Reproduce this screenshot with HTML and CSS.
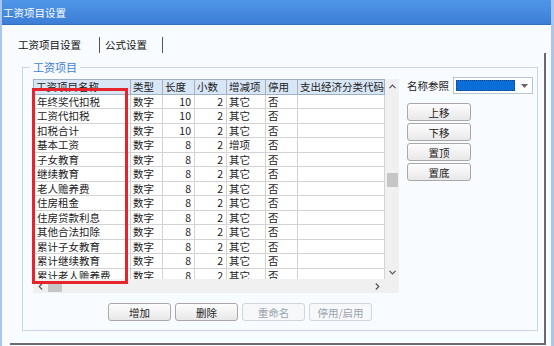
FILE: index.html
```html
<!DOCTYPE html>
<html lang="zh-CN">
<head>
<meta charset="UTF-8">
<meta name="viewport" content="width=device-width, initial-scale=1.0">
<link rel="stylesheet" href="styles.css">
</head>
<body>

<div class="window">
  <div class="titlebar">工资项目设置</div>

  <div class="tabs">
    <span class="tab tab-first">工资项目设置</span>
    <span class="tab-sep"></span>
    <span class="tab tab-second">公式设置</span>
    <span class="tab-sep"></span>
  </div>

  <div class="panel">
    <div class="group">
      <div class="group-title">工资项目</div>

      <div class="group-body">
        <!-- item grid -->
        <div class="grid">
          <div class="grid-view">
            <table>
              <colgroup>
                <col class="c-name"><col class="c-type"><col class="c-len"><col class="c-dec"><col class="c-kind"><col class="c-stop"><col class="c-code">
              </colgroup>
              <tr><th>工资项目名称</th><th>类型</th><th>长度</th><th>小数</th><th>增减项</th><th>停用</th><th>支出经济分类代码</th></tr>
              <tr><td>年终奖代扣税</td><td>数字</td><td class="num">10</td><td class="num">2</td><td>其它</td><td>否</td><td></td></tr>
              <tr><td>工资代扣税</td><td>数字</td><td class="num">10</td><td class="num">2</td><td>其它</td><td>否</td><td></td></tr>
              <tr><td>扣税合计</td><td>数字</td><td class="num">10</td><td class="num">2</td><td>其它</td><td>否</td><td></td></tr>
              <tr><td>基本工资</td><td>数字</td><td class="num">8</td><td class="num">2</td><td>增项</td><td>否</td><td></td></tr>
              <tr><td>子女教育</td><td>数字</td><td class="num">8</td><td class="num">2</td><td>其它</td><td>否</td><td></td></tr>
              <tr><td>继续教育</td><td>数字</td><td class="num">8</td><td class="num">2</td><td>其它</td><td>否</td><td></td></tr>
              <tr><td>老人赡养费</td><td>数字</td><td class="num">8</td><td class="num">2</td><td>其它</td><td>否</td><td></td></tr>
              <tr><td>住房租金</td><td>数字</td><td class="num">8</td><td class="num">2</td><td>其它</td><td>否</td><td></td></tr>
              <tr><td>住房贷款利息</td><td>数字</td><td class="num">8</td><td class="num">2</td><td>其它</td><td>否</td><td></td></tr>
              <tr><td>其他合法扣除</td><td>数字</td><td class="num">8</td><td class="num">2</td><td>其它</td><td>否</td><td></td></tr>
              <tr><td>累计子女教育</td><td>数字</td><td class="num">8</td><td class="num">2</td><td>其它</td><td>否</td><td></td></tr>
              <tr><td>累计继续教育</td><td>数字</td><td class="num">8</td><td class="num">2</td><td>其它</td><td>否</td><td></td></tr>
              <tr><td>累计老人赡养费</td><td>数字</td><td class="num">8</td><td class="num">2</td><td>其它</td><td>否</td><td></td></tr>
            </table>

            <div class="vscroll">
              <span class="arrow"><svg width="7" height="5" viewBox="0 0 7 5"><path d="M0.5 4.2 L3.5 1.2 L6.5 4.2" fill="none" stroke="#555" stroke-width="1.2"/></svg></span>
              <span class="vthumb"></span>
              <span class="arrow arrow-end"><svg width="7" height="5" viewBox="0 0 7 5"><path d="M0.5 0.8 L3.5 3.8 L6.5 0.8" fill="none" stroke="#555" stroke-width="1.2"/></svg></span>
            </div>
          </div>

          <div class="hscroll">
            <span class="arrow"><svg width="5" height="7" viewBox="0 0 5 7"><path d="M4.2 0.5 L1.2 3.5 L4.2 6.5" fill="none" stroke="#555" stroke-width="1.2"/></svg></span>
            <span class="hthumb"></span>
            <span class="arrow arrow-end"><svg width="5" height="7" viewBox="0 0 5 7"><path d="M0.8 0.5 L3.8 3.5 L0.8 6.5" fill="none" stroke="#555" stroke-width="1.2"/></svg></span>
            <span class="corner"></span>
          </div>

          <!-- red annotation box -->
          <div class="mark"></div>
        </div>

        <!-- right side -->
        <div class="side">
          <div class="ref">
            <span class="ref-label">名称参照</span>
            <span class="combo">
              <span class="combo-value"></span>
              <svg class="combo-arrow" width="7" height="4" viewBox="0 0 7 4"><path d="M0 0 L7 0 L3.5 4 Z" fill="#666"/></svg>
            </span>
          </div>
          <div class="side-buttons">
            <button class="btn">上移</button>
            <button class="btn">下移</button>
            <button class="btn">置顶</button>
            <button class="btn">置底</button>
          </div>
        </div>
      </div>

      <div class="actions">
        <button class="btn">增加</button>
        <button class="btn">删除</button>
        <button class="btn" disabled>重命名</button>
        <button class="btn" disabled>停用/启用</button>
      </div>
    </div>
  </div>
</div>

</body>
</html>
```

FILE: styles.css
```css
body {
  margin: 0;
  font-family: "Noto Sans CJK SC", "Noto Sans", sans-serif;
  font-size: 10.5px;
  color: #1b1b1b;
}
.window {
  width: 554px;
  height: 346px;
  box-sizing: border-box;
  border-left: 2px solid #a9c7ee;
  border-right: 3px solid #a9c7ee;
  background: #f8fbff;
  overflow: hidden;
}
.titlebar {
  height: 24px;
  line-height: 25px;
  padding-left: 1px;
  color: #fff;
  background: linear-gradient(#4f96e8, #3c7ed7);
  border-bottom: 1px solid #3470c2;
}

/* tabs */
.tabs {
  display: flex;
  align-items: center;
  height: 28px;
  box-sizing: border-box;
  padding: 12px 0 0 16px;
}
.tab {
  line-height: 16px;
  color: #111;
}
.tab-first {
  margin-right: 18px;
}
.tab-second {
  margin: 0 15px 0 5px;
}
.tab-sep {
  width: 1px;
  height: 16px;
  background: #555;
}

.panel {
  width: 536px;
  height: 292px;
  box-sizing: border-box;
  margin-left: 8px;
  padding: 14px 0 0 12px;
  border-right: 2px solid #6a6a6a;
  border-bottom: 2px solid #6a6a6a;
}
.group {
  width: 516px;
  height: 264px;
  box-sizing: border-box;
  border: 1px solid #c8d5e6;
  padding-left: 10px;
}
.group-title {
  display: table;
  margin: -8px 0 0 -3px;
  padding: 0 3px;
  line-height: 14px;
  font-size: 11px;
  color: #3d7fd6;
  background: #f8fbff;
}
.group-body {
  display: flex;
  align-items: flex-start;
  gap: 8px;
  margin-top: 3px;
}

/* grid */
.grid {
  position: relative;
  width: 366px;
  margin-top: 2px;
}
.grid-view {
  display: flex;
  height: 200px;
  overflow: hidden;
  background: #fff;
}
table {
  border-collapse: collapse;
  table-layout: fixed;
  width: 351px;
  flex: none;
  align-self: flex-start;
}
.c-name { width: 97px; }
.c-type { width: 32px; }
.c-len { width: 32px; }
.c-dec { width: 32px; }
.c-kind { width: 39px; }
.c-stop { width: 32px; }
.c-code { width: 87px; }
tr {
  height: 14.5px;
}
th, td {
  padding: 0 2px;
  line-height: 12px;
  white-space: nowrap;
  overflow: hidden;
  text-align: left;
  font-weight: normal;
}
th {
  height: 13px;
  background: #d8e6f5;
  border: 1px solid #9fb1c4;
}
td {
  padding-top: 1px;
  border: 1px solid #d3d3d3;
  border-top-color: #cfcfcf;
}
td:first-child {
  padding-left: 3px;
}
td.num {
  text-align: right;
  padding-right: 3px;
}

.vscroll {
  display: flex;
  flex-direction: column;
  align-items: center;
  width: 15px;
  background: #f0f0f0;
}
.arrow {
  display: flex;
  align-items: center;
  justify-content: center;
  width: 14px;
  height: 14px;
  flex: none;
}
.arrow-end {
  margin-top: auto;
}
.vthumb {
  width: 11px;
  height: 14px;
  margin-top: 80px;
  background: #c6c6c6;
}
.hscroll {
  display: flex;
  align-items: center;
  height: 14px;
  background: #f0f0f0;
}
.hscroll .arrow-end {
  margin: 0 0 0 auto;
}
.hthumb {
  width: 14px;
  height: 11px;
  margin-left: 1px;
  background: #c6c6c6;
}
.corner {
  width: 15px;
  height: 14px;
}
.mark {
  position: absolute;
  left: -1px;
  top: 9px;
  width: 96px;
  height: 196px;
  box-sizing: border-box;
  border: 3px solid #e6242c;
}

/* side column */
.side {
  display: flex;
  flex-direction: column;
}
.ref {
  display: flex;
  align-items: center;
  gap: 4px;
}
.ref-label {
  color: #222;
}
.combo {
  display: flex;
  align-items: center;
  width: 80px;
  height: 17px;
  box-sizing: border-box;
  padding-left: 2px;
  border: 1px solid #b8c5d5;
  background: #fff;
}
.combo-value {
  width: 59px;
  height: 11px;
  box-sizing: border-box;
  border: 1px dotted #1a3d70;
  background: #0b6fd9;
}
.combo-arrow {
  margin-left: 6px;
}
.side-buttons {
  display: flex;
  flex-direction: column;
  gap: 2px;
  margin-top: 9px;
}

.btn {
  width: 64px;
  height: 18px;
  box-sizing: border-box;
  padding: 0;
  border: 1px solid #a8a8a8;
  border-radius: 3px;
  background: linear-gradient(#fdfdfd, #e8e8e8);
  font: inherit;
  color: #222;
}
.btn:disabled {
  border-color: #d0d5db;
  background: #f7f8fa;
  color: #9aa3ad;
}
.actions {
  display: flex;
  gap: 4px;
  margin: 10px 0 0 75px;
}
.actions .btn {
  width: 63px;
}
```
